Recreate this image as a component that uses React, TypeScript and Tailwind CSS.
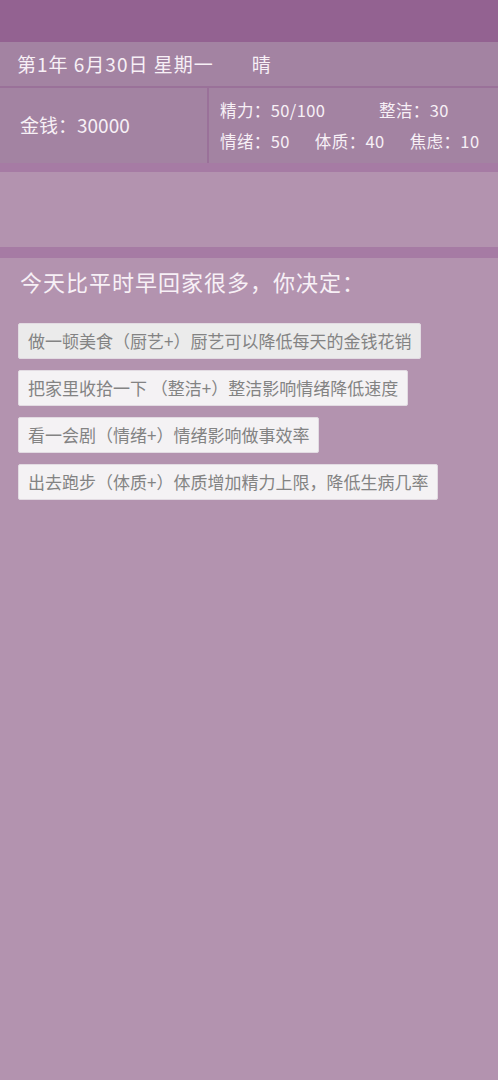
import React from 'react'

const choices = [
  '做一顿美食（厨艺+）厨艺可以降低每天的金钱花销',
  '把家里收拾一下 （整洁+）整洁影响情绪降低速度',
  '看一会剧（情绪+）情绪影响做事效率',
  '出去跑步（体质+）体质增加精力上限，降低生病几率',
]

export default function App() {
  return (
    <div
      className="min-h-[1080px] w-full bg-[#b393af] text-[#f7f0f6]"
      style={{ fontFamily: '"Noto Sans CJK SC", "Noto Sans", sans-serif' }}
    >
      <div className="h-[42px] bg-[#936291]" />

      <div className="flex h-[46px] items-center border-b-2 border-[#9a7199] bg-[#a383a2] pl-[17px] text-[19px] tracking-[1px]">
        <span>第1年 6月30日 星期一</span>
        <span className="ml-[38px]">晴</span>
      </div>

      <div className="flex h-[75px] bg-[#a383a2]">
        <div className="flex w-[209px] items-center border-r-2 border-[#9a7199] pl-[20px] text-[19px]">
          金钱：30000
        </div>
        <div className="flex flex-1 flex-col justify-center gap-[9px] pl-[11px] text-[16.5px] leading-[22px] tracking-[0.4px]">
          <div className="flex">
            <span className="w-[159px]">精力：50/100</span>
            <span>整洁：30</span>
          </div>
          <div className="flex gap-[25px]">
            <span>情绪：50</span>
            <span>体质：40</span>
            <span>焦虑：10</span>
          </div>
        </div>
      </div>

      <div className="h-[9px] bg-[#a67ba4]" />
      <div className="h-[75px] bg-[#b393af]" />
      <div className="h-[11px] bg-[#a67ba4]" />

      <div className="px-[18px] pt-[8px]">
        <div className="pl-[2px] text-[22px] leading-[30px] tracking-[1px]">今天比平时早回家很多，你决定：</div>
        <div className="mt-[27px] flex flex-col items-start gap-[11px]">
          {choices.map((c, i) => (
            <button
              key={c}
              className={`h-[36px] whitespace-nowrap rounded-[2px] border border-[#e2dbe2] px-[9px] text-[17px] text-[#838383] ${
                i === 0 ? 'bg-[#ebebeb]' : 'bg-[#f4f2f4]'
              }`}
              style={{ fontFamily: 'inherit' }}
            >
              {c}
            </button>
          ))}
        </div>
      </div>
    </div>
  )
}
